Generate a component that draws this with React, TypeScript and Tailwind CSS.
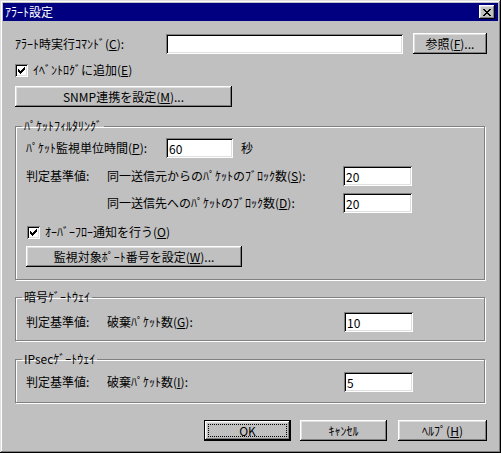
import React from 'react';

const raised =
  'bg-[#c0c0c0] shadow-[inset_-1px_-1px_#000,inset_1px_1px_#fff,inset_-2px_-2px_#808080,inset_2px_2px_#dfdfdf]';
const sunken =
  'bg-white shadow-[inset_1px_1px_#808080,inset_-1px_-1px_#fff,inset_2px_2px_#000,inset_-2px_-2px_#dfdfdf]';

const CHECK: [number, number][] = [
  [6, 0], [5, 1], [6, 1], [0, 2], [4, 2], [5, 2], [6, 2],
  [0, 3], [1, 3], [3, 3], [4, 3], [5, 3],
  [0, 4], [1, 4], [2, 4], [3, 4], [4, 4],
  [1, 5], [2, 5], [3, 5], [2, 6],
];

const CROSS: [number, number][] = [
  [0, 0], [1, 0], [6, 0], [7, 0],
  [1, 1], [2, 1], [5, 1], [6, 1],
  [2, 2], [3, 2], [4, 2], [5, 2],
  [3, 3], [4, 3],
  [2, 4], [3, 4], [4, 4], [5, 4],
  [1, 5], [2, 5], [5, 5], [6, 5],
  [0, 6], [1, 6], [6, 6], [7, 6],
];

const Pixels = ({ pts, w, h }: { pts: [number, number][]; w: number; h: number }) => (
  <svg width={w} height={h} viewBox={`0 0 ${w} ${h}`} shapeRendering="crispEdges">
    {pts.map(([x, y]) => (
      <rect key={`${x}-${y}`} x={x} y={y} width={1} height={1} fill="#000" />
    ))}
  </svg>
);

const Btn = ({ className, children }: { className: string; children: React.ReactNode }) => (
  <button className={`${raised} flex items-center justify-center text-[12px] leading-[14px] ${className}`}>
    {children}
  </button>
);

const Field = ({ className, value }: { className: string; value: string }) => (
  <input
    readOnly
    defaultValue={value}
    className={`${sunken} h-[20px] pl-[3px] text-[12px] outline-none ${className}`}
  />
);

const Check = ({ children, className = '' }: { children: React.ReactNode; className?: string }) => (
  <div className={`flex items-center gap-[5px] ${className}`}>
    <div className={`${sunken} flex h-[13px] w-[13px] items-center justify-center`}>
      <Pixels pts={CHECK} w={7} h={7} />
    </div>
    <span>{children}</span>
  </div>
);

const Group = ({ title, className, children }: { title: string; className: string; children: React.ReactNode }) => (
  <fieldset className={`w-[470px] border border-[#808080] shadow-[inset_1px_1px_#fff,1px_1px_#fff] ${className}`}>
    <legend className="ml-[6px] px-[2px] leading-[14px]">{title}</legend>
    {children}
  </fieldset>
);

export default function App() {
  return (
    <div className="flex h-[453px] w-[501px] flex-col bg-[#c0c0c0] p-[3px] font-['Noto_Sans_CJK_JP',sans-serif] text-[12px] leading-[14px] text-black shadow-[inset_-1px_-1px_#000,inset_1px_1px_#dfdfdf,inset_-2px_-2px_#808080,inset_2px_2px_#fff]">
      <div className="flex h-[18px] items-center justify-between bg-[#000080] pl-[2px] pr-[3px]">
        <span className="text-white">ｱﾗｰﾄ設定</span>
        <button className={`${raised} flex h-[14px] w-[16px] items-center justify-center`}>
          <Pixels pts={CROSS} w={8} h={7} />
        </button>
      </div>

      <div className="flex flex-col pl-[12px] pr-[11px]">
        <div className="mt-[12px] flex items-center">
          <span className="w-[151px]">
            ｱﾗｰﾄ時実行ｺﾏﾝﾄﾞ(<u>C</u>):
          </span>
          <Field className="w-[237px]" value="" />
          <Btn className="ml-[10px] h-[21px] w-[74px]">
            参照(<u>F</u>)...
          </Btn>
        </div>

        <Check className="mt-[9px]">
          ｲﾍﾞﾝﾄﾛｸﾞに追加(<u>E</u>)
        </Check>

        <Btn className="mt-[9px] h-[21px] w-[217px]">
          SNMP連携を設定(<u>M</u>)...
        </Btn>

        <Group title="ﾊﾟｹｯﾄﾌｨﾙﾀﾘﾝｸﾞ" className="mt-[12px]">
          <div className="flex flex-col pb-[12px] pl-[10px]">
            <div className="mt-[5px] flex items-center">
              <span className="w-[140px]">
                ﾊﾟｹｯﾄ監視単位時間(<u>P</u>):
              </span>
              <Field className="w-[67px]" value="60" />
              <span className="ml-[8px]">秒</span>
            </div>
            <div className="mt-[8px] flex items-center">
              <span className="w-[81px]">判定基準値:</span>
              <span className="w-[236px]">
                同一送信元からのﾊﾟｹｯﾄのﾌﾞﾛｯｸ数(<u>S</u>):
              </span>
              <Field className="w-[69px]" value="20" />
            </div>
            <div className="mt-[7px] flex items-center pl-[81px]">
              <span className="w-[236px]">
                同一送信先へのﾊﾟｹｯﾄのﾌﾞﾛｯｸ数(<u>D</u>):
              </span>
              <Field className="w-[69px]" value="20" />
            </div>
            <Check className="ml-[1px] mt-[12px]">
              ｵｰﾊﾞｰﾌﾛｰ通知を行う(<u>O</u>)
            </Check>
            <Btn className="mt-[7px] h-[21px] w-[216px]">
              監視対象ﾎﾟｰﾄ番号を設定(<u>W</u>)...
            </Btn>
          </div>
        </Group>

        <Group title="暗号ｹﾞｰﾄｳｪｲ" className="mt-[10px]">
          <div className="mt-[8px] flex items-center pb-[8px] pl-[10px]">
            <span className="w-[81px]">判定基準値:</span>
            <span className="w-[237px]">
              破棄ﾊﾟｹｯﾄ数(<u>G</u>):
            </span>
            <Field className="w-[69px]" value="10" />
          </div>
        </Group>

        <Group title="IPsecｹﾞｰﾄｳｪｲ" className="mt-[11px]">
          <div className="mt-[6px] flex items-center pb-[10px] pl-[10px]">
            <span className="w-[81px]">判定基準値:</span>
            <span className="w-[237px]">
              破棄ﾊﾟｹｯﾄ数(<u>I</u>):
            </span>
            <Field className="w-[69px]" value="5" />
          </div>
        </Group>

        <div className="mt-[17px] flex justify-end">
          <div className="h-[21px] w-[87px] border border-black">
            <div className={`${raised} flex h-full w-full p-[3px]`}>
              <span className="flex flex-1 items-center justify-center border border-dotted border-black">OK</span>
            </div>
          </div>
          <Btn className="ml-[9px] h-[21px] w-[87px]">ｷｬﾝｾﾙ</Btn>
          <Btn className="ml-[11px] h-[21px] w-[89px]">
            ﾍﾙﾌﾟ(<u>H</u>)
          </Btn>
        </div>
      </div>
    </div>
  );
}
